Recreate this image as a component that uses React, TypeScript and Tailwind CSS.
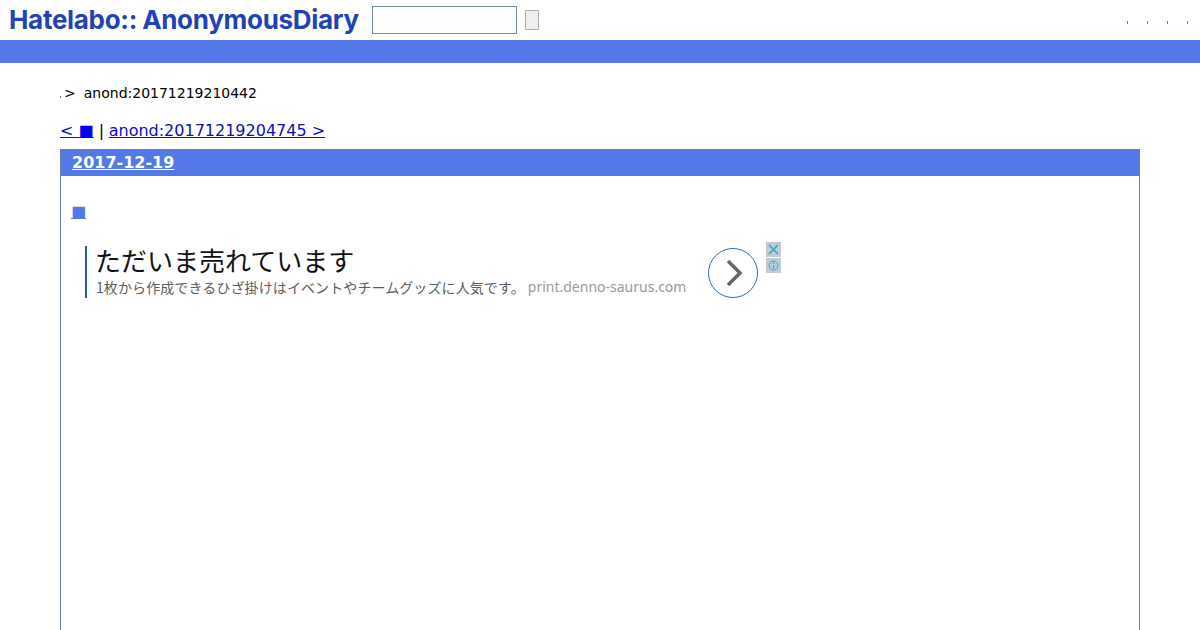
export default function App() {
  return (
    <div className="h-[630px] w-[1200px] overflow-hidden bg-white font-['DejaVu_Sans',sans-serif] text-black">
      <header className="flex h-10 items-center">
        <div className="ml-[9px] flex w-[363px] font-['Inter',sans-serif] text-[26px] leading-10 font-bold tracking-[-0.3px] whitespace-nowrap text-[#1f43b5]">
          <span>Hatelabo::</span>
          <span className="ml-[5px]">AnonymousDiary</span>
        </div>
        <div className="mb-[1px] h-[28px] w-[145px] border border-[#6f86ad] bg-white" />
        <div className="mb-[1px] ml-2 h-5 w-[14px] rounded-[1px] border border-[#a9a9a9] bg-[#efefef]" />
        <div className="mt-1 mr-[12px] ml-auto flex gap-[19px]">
          <span className="h-[3px] w-px bg-[#777]" />
          <span className="h-[3px] w-px bg-[#777]" />
          <span className="h-[3px] w-px bg-[#777]" />
          <span className="h-[3px] w-px bg-[#777]" />
        </div>
      </header>
      <div className="h-[23px] bg-[#5279e7]" />
      <main className="px-[60px]">
        <div className="mt-[21px] flex h-[18px] items-center text-sm leading-[18px] whitespace-nowrap">
          <span className="mt-[7px] h-[2px] w-px bg-[#777]" />
          <span className="ml-[3px]">&gt;</span>
          <span className="ml-2">anond:20171219210442</span>
        </div>
        <div className="mt-[19px] flex h-[19px] text-base leading-[19px] whitespace-pre">
          <a className="text-[#0c0cc0] underline" href="#">&lt; <span className="text-[#0000ee]">■</span></a>
          <span className="-mr-[0.5px]"> | </span>
          <a className="text-[#0c0cc0] underline" href="#">anond:20171219204745 &gt;</a>
        </div>
        <section className="mt-[9px] h-[490px] border border-[#6f7fa8]">
          <div className="h-[26px] bg-[#5279e7] pl-[11px] text-base leading-[25px] font-bold text-white underline">2017-12-19</div>
          <div className="mt-[27px] ml-[10px] h-[18px] text-base leading-[18px] text-[#5279e7] underline">■</div>
          <div className="mt-[21px] ml-6 flex h-[60px] items-start">
            <div className="mt-[4px] flex h-[52px] w-[623px] flex-col border-l-2 border-[#2a5ca8] pl-[9px]">
              <div className="-mt-px -ml-px font-['Noto_Sans_CJK_JP',sans-serif] text-[26px] leading-[30px] whitespace-nowrap text-[#111]">ただいま売れています</div>
              <div className="mt-[2px] flex font-['Noto_Sans_CJK_JP',sans-serif] text-sm leading-[20px] tracking-[0.1px] whitespace-nowrap text-[#5c5c5c]">
                <span>1枚から作成できるひざ掛けはイベントやチームグッズに人気です。</span>
                <span className="ml-[3px] font-['Noto_Sans',sans-serif] tracking-normal text-[#999]">print.denno-saurus.com</span>
              </div>
            </div>
            <div className="mt-[6px] flex h-[50px] w-[50px] items-center justify-center rounded-full border-[1.5px] border-[#2a6db0]">
              <svg width="20" height="28" viewBox="0 0 20 28" fill="none" className="ml-[2px]">
                <path d="M4 2 L16 14 L4 26" stroke="#666" strokeWidth="3.5" />
              </svg>
            </div>
            <div className="ml-2 flex flex-col">
              <div className="flex h-[15px] w-[15px] items-center justify-center bg-[#c0ccd2]">
                <svg width="11" height="11" viewBox="0 0 11 11" fill="none">
                  <path d="M1 1 L10 10 M10 1 L1 10" stroke="#2fa5d6" strokeWidth="1.6" />
                </svg>
              </div>
              <div className="mt-px flex h-[15px] w-[15px] items-center justify-center bg-[#c0ccd2]">
                <svg width="11" height="11" viewBox="0 0 11 11" fill="none">
                  <circle cx="5.5" cy="5.5" r="4.5" stroke="#2fa5d6" />
                  <path d="M5.5 2.5 V4 M5.5 5 V8.5" stroke="#2fa5d6" strokeWidth="1.2" />
                </svg>
              </div>
            </div>
          </div>
        </section>
      </main>
    </div>
  );
}
